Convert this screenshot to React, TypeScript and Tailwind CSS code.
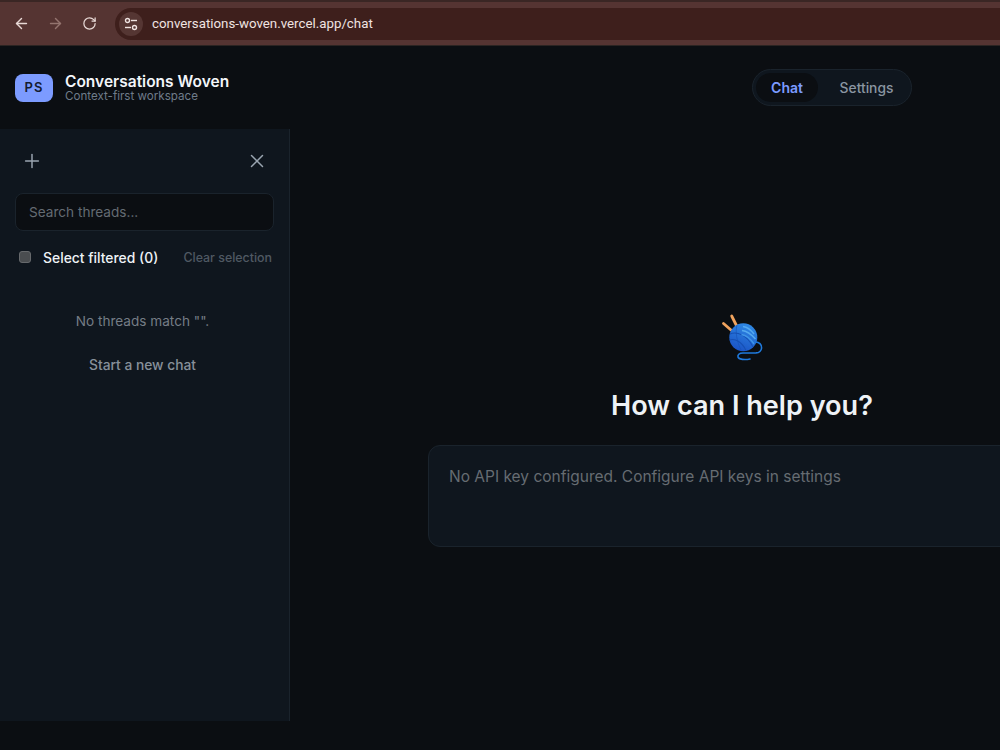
import { ArrowLeft, ArrowRight, Plus, RotateCw, X } from "lucide-react";

const YarnLogo = () => (
  <svg width="42" height="48" viewBox="0 0 42 48" fill="none">
    <defs>
      <linearGradient id="ball" x1="0.7" y1="0" x2="0.3" y2="1">
        <stop offset="0" stopColor="#2f8ae6" />
        <stop offset="1" stopColor="#1a52c4" />
      </linearGradient>
    </defs>
    <path d="M2.5 9.5 L10 16" stroke="#f0a35e" strokeWidth="2.8" strokeLinecap="round" />
    <path d="M10.7 2 L15.7 12" stroke="#f0a35e" strokeWidth="2.8" strokeLinecap="round" />
    <circle cx="22.3" cy="23.3" r="14" fill="url(#ball)" />
    <path d="M9 20 C16 17 26 21 32 33" stroke="#1650b4" strokeWidth="1.1" />
    <path d="M8.6 26 C14 24 21 28 25 36.5" stroke="#1650b4" strokeWidth="1.1" />
    <path d="M16 11 C14 18 16 28 20 36" stroke="#1650b4" strokeWidth="1" opacity="0.6" />
    <path d="M22 12.5 C26 13 30 16 33 20" stroke="#55aaf0" strokeWidth="1.6" />
    <path d="M21 16.5 C25 17 30 20 34.5 25" stroke="#55aaf0" strokeWidth="1.6" />
    <path d="M20.5 20.5 C24 21 29 24 33 30" stroke="#3f95e8" strokeWidth="1.4" />
    <path d="M34 28 C38 27.5 41 31 40.6 34 C40.2 37 38 38.8 35 38.9 L22 39 C18 39 16.5 41 17 43 C17.6 45.6 24 46 29 45" stroke="#1f79dc" strokeWidth="1.6" strokeLinecap="round" />
  </svg>
);

const App = () => {
  return (
    <div className="w-[1000px] h-[750px] overflow-hidden flex flex-col bg-[#0b0e12] font-['Inter',sans-serif]">
      {/* Browser bar */}
      <div className="h-[46px] shrink-0 flex items-center pl-[13px] gap-[17px] bg-[#553432] border-t-[2px] border-[#3a2624] border-b border-b-[#2c2422]">
        <ArrowLeft size={17} strokeWidth={2} className="text-[#e8d9d6]" />
        <ArrowRight size={17} strokeWidth={2} className="text-[#94746f]" />
        <RotateCw size={15} strokeWidth={2} className="text-[#e8d9d6] ml-[1px]" />
        <div className="flex-1 h-[32px] ml-[1px] flex items-center rounded-l-full bg-[#3e1f1c] pl-[4px]">
          <div className="w-[24px] h-[24px] rounded-full bg-[#553633] flex items-center justify-center">
            <svg width="14" height="14" viewBox="0 0 14 14" fill="none" stroke="#efe3e1" strokeWidth="1.4">
              <circle cx="3.5" cy="3.5" r="2" />
              <path d="M7 3.5h6" />
              <circle cx="10.5" cy="10.5" r="2" />
              <path d="M1 10.5h6" />
            </svg>
          </div>
          <span className="ml-[9px] text-[13.3px] text-[#f0e3e1] font-['Roboto',sans-serif]">conversations-woven.vercel.app/chat</span>
        </div>
      </div>

      {/* App header */}
      <header className="h-[83px] shrink-0 flex items-center justify-between pl-[15px] pr-[88px]">
        <div className="flex items-center gap-3">
          <div className="w-[38px] h-[28px] rounded-lg bg-[#7c9bff] flex items-center justify-center text-[13px] font-semibold tracking-[0.08em] text-[#141c30]">PS</div>
          <div className="flex flex-col pt-[2px]">
            <span className="text-[15.5px] leading-[16px] font-semibold text-[#f3f6fa]">Conversations Woven</span>
            <span className="text-[11.6px] leading-[13px] text-[#6f7c8a]">Context-first workspace</span>
          </div>
        </div>
        <nav className="w-[160px] h-[37px] flex items-center gap-1 rounded-full border border-[#1a232c] bg-[#0f161e] px-[3px]">
          <span className="w-[62px] h-[29px] flex items-center justify-center rounded-full bg-[#0b0e12] text-[14px] font-semibold text-[#7c9bff]">Chat</span>
          <span className="flex-1 pl-[3px] pt-[1px] text-center text-[13.8px] font-medium text-[#8a95a1]">Settings</span>
        </nav>
      </header>

      <div className="flex h-[592px] shrink-0 w-[1194px]">
        {/* Threads sidebar */}
        <aside className="w-[290px] shrink-0 flex flex-col bg-[#0f161e] border-r border-[#1a232c] px-[15px]">
          <div className="h-[64px] shrink-0 flex items-center justify-between pl-[6px] pr-[6px]">
            <Plus size={22} strokeWidth={1.6} className="text-[#9aa5b1]" />
            <X size={22} strokeWidth={1.6} className="text-[#9aa5b1]" />
          </div>
          <div className="h-[38px] shrink-0 flex items-center rounded-lg border border-[#1a232c] bg-[#0b0e12] px-[13px] text-[13.6px] text-[#646b72]">
            Search threads...
          </div>
          <div className="h-[54px] shrink-0 flex items-center justify-between pl-[4px] pr-[2px]">
            <div className="flex items-center gap-[12px]">
              <span className="w-[12px] h-[12px] rounded-[3px] bg-[#4a4d50] border border-[#66696c] -mt-[2px]" />
              <span className="text-[13.9px] font-medium text-[#eef2f6]">Select filtered (0)</span>
            </div>
            <span className="text-[12.4px] font-medium text-[#4f5963]">Clear selection</span>
          </div>
          <p className="mt-[26px] pr-[4px] text-center text-[13.6px] text-[#757d86]">No threads match "".</p>
          <p className="mt-[24px] pr-[4px] text-center text-[13.8px] font-medium text-[#87909a]">Start a new chat</p>
        </aside>

        {/* Chat area */}
        <main className="flex-1 flex flex-col items-center pt-[185px]">
          <YarnLogo />
          <h1 className="mt-[26px] text-[27.1px] leading-[36px] font-semibold text-[#eef2f6]">How can I help you?</h1>
          <div className="mt-[21px] w-[628px] h-[102px] rounded-xl border border-[#1a232c] bg-[#0f161e] px-[20px] py-[19px] text-[15.5px] leading-[24px] text-[#666c72]">
            No API key configured. Configure API keys in settings
          </div>
        </main>
      </div>
    </div>
  );
};

export default App;
